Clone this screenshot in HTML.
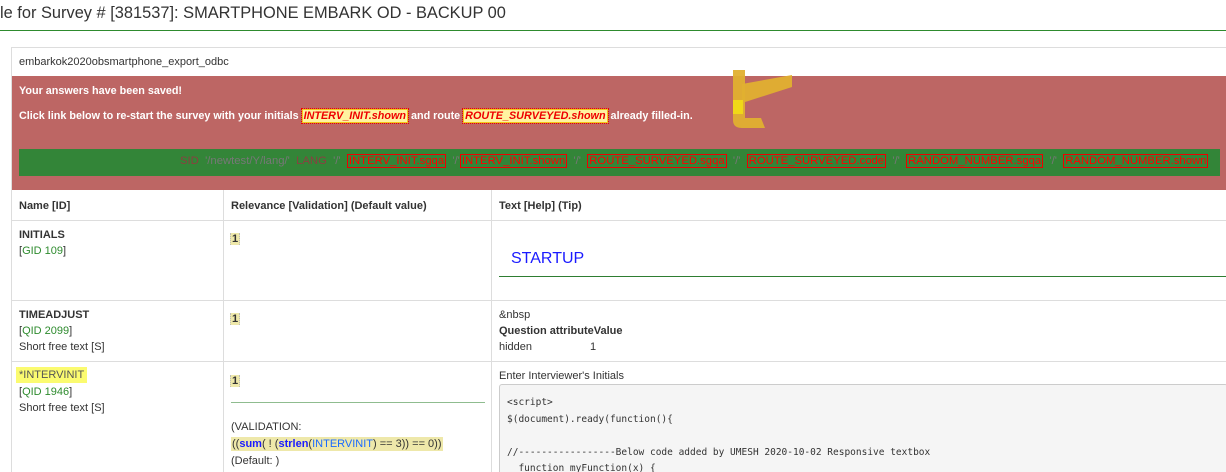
<!DOCTYPE html>
<html><head><meta charset="utf-8"><style>
html,body{margin:0;width:1226px;height:472px;overflow:hidden}
body{background:#fff;font-family:"Liberation Sans",Arial,sans-serif;color:#333;position:relative}
.a{position:absolute}
.t{font-size:11px}
.b{font-weight:bold}
.g{color:#2e8b2e}
.one{background:#eee8aa;border-left:1px dotted #bbb;border-right:1px dotted #bbb;font-weight:bold;padding:0 1px;font-size:11px}
.rb{border:1px solid #e00;color:#f00;padding:0 1px}
.yb{background:#fff3a0;outline:1px dotted #e00;border:1px solid #f5c518;color:#e00;font-style:italic;padding:0 1px}
pre{margin:0;font-family:"DejaVu Sans Mono","Liberation Mono",monospace;font-size:9.5px;line-height:16.5px;color:#333}
</style></head><body>
<div class="a" style="left:0;top:4px;font-size:16.4px;color:#333">le for Survey # [381537]: SMARTPHONE EMBARK OD - BACKUP 00</div>
<div class="a" style="left:0;top:30px;width:1226px;height:1px;background:#2e8b2e"></div>
<div class="a" style="left:11px;top:47px;width:1215px;height:430px;border:1px solid #ddd;border-right:none"></div>
<div class="a t" style="left:19px;top:56px">embarkok2020obsmartphone_export_odbc</div>
<div class="a" style="left:12px;top:76px;width:1214px;height:114px;background:#bd6664"></div>
<div class="a b" style="left:19px;top:85px;color:#fff;font-size:10.8px">Your answers have been saved!</div>
<div class="a b" style="left:19px;top:110px;color:#fff;font-size:10.8px">Click link below to re-start the survey with your initials <span class="yb">INTERV_INIT.shown</span> and route <span class="yb">ROUTE_SURVEYED.shown</span> already filled-in.</div>
<svg class="a" style="left:728px;top:70px" width="80" height="62"><path d="M5 0h12v48h16l4 10H14q-9 0-9-8z" fill="#e0b030" opacity=".95"/><path d="M14 14l50-9v12l-50 16z" fill="#e0b030" opacity=".95"/><rect x="5" y="30" width="10" height="14" fill="#f0d818"/></svg>
<div class="a" style="left:19px;top:149px;width:1201px;height:27px;background:#338538"></div>
<div class="a" style="left:180px;top:155px;color:#777;white-space:nowrap;font-size:11.3px"><span style="color:#8a4040">SID</span>&nbsp; '/newtest/Y/lang/'&nbsp; <span style="color:#8a4040">LANG</span>&nbsp; '/'&nbsp; <span class="rb">INTERV_INIT.sgqa</span>&nbsp; '/'<span class="rb">INTERV_INIT.shown</span>&nbsp; '/'&nbsp; <span class="rb">ROUTE_SURVEYED.sgqa</span>&nbsp; '/'&nbsp; <span class="rb">ROUTE_SURVEYED.code</span>&nbsp; '/'&nbsp; <span class="rb">RANDOM_NUMBER.sgqa</span>&nbsp; '/'&nbsp; <span class="rb">RANDOM_NUMBER.shown</span></div>
<div class="a" style="left:12px;top:220px;width:1214px;height:1px;background:#ddd"></div>
<div class="a" style="left:12px;top:300px;width:1214px;height:1px;background:#ddd"></div>
<div class="a" style="left:12px;top:361px;width:1214px;height:1px;background:#ddd"></div>
<div class="a" style="left:223px;top:190px;width:1px;height:282px;background:#ddd"></div>
<div class="a" style="left:491px;top:190px;width:1px;height:282px;background:#ddd"></div>
<div class="a t b" style="left:19px;top:200px">Name [ID]</div>
<div class="a t b" style="left:231px;top:200px">Relevance [Validation] (Default value)</div>
<div class="a t b" style="left:499px;top:200px">Text [Help] (Tip)</div>
<div class="a t b" style="left:19px;top:229px">INITIALS</div>
<div class="a t" style="left:19px;top:245px">[<span class="g">GID 109</span>]</div>
<div class="a" style="left:230px;top:229px"><span class="one">1</span></div>
<div class="a" style="left:511px;top:250px;font-size:16px;color:#1a1aff">STARTUP</div>
<div class="a" style="left:499px;top:276px;width:727px;height:1px;background:#2e7d32"></div>
<div class="a t b" style="left:19px;top:309px">TIMEADJUST</div>
<div class="a t" style="left:19px;top:325px">[<span class="g">QID 2099</span>]</div>
<div class="a t" style="left:19px;top:341px">Short free text [S]</div>
<div class="a" style="left:230px;top:309px"><span class="one">1</span></div>
<div class="a t" style="left:499px;top:309px">&amp;nbsp</div>
<div class="a t b" style="left:499px;top:325px">Question attributeValue</div>
<div class="a t" style="left:499px;top:341px">hidden<span style="margin-left:58px">1</span></div>
<div class="a t" style="left:16px;top:367px;background:#fbfb70;padding:2px 3px;color:#555">*INTERVINIT</div>
<div class="a t" style="left:19px;top:386px">[<span class="g">QID 1946</span>]</div>
<div class="a t" style="left:19px;top:402px">Short free text [S]</div>
<div class="a" style="left:230px;top:371px"><span class="one">1</span></div>
<div class="a" style="left:231px;top:402px;width:254px;height:1px;background:#8fbc8f"></div>
<div class="a t" style="left:231px;top:421px">(VALIDATION:</div>
<div class="a t" style="left:231px;top:437px;background:#eee8aa;padding:1px 1px">((<b style="color:#1a1aff">sum</b>( ! (<b style="color:#1a1aff">strlen</b>(<span style="color:#1a6aff">INTERVINIT</span>) == 3)) == 0))</div>
<div class="a t" style="left:231px;top:455px">(Default: )</div>
<div class="a t" style="left:499px;top:370px">Enter Interviewer's Initials</div>
<div class="a" style="left:499px;top:384px;width:727px;height:100px;background:#f5f5f5;border:1px solid #ccc;border-radius:3px"></div>
<pre class="a" style="left:507px;top:395px">&lt;script&gt;
$(document).ready(function(){

//-----------------Below code added by UMESH 2020-10-02 Responsive textbox
  function myFunction(x) {
    if (x.matches) { // If media query matches</pre>
</body></html>
